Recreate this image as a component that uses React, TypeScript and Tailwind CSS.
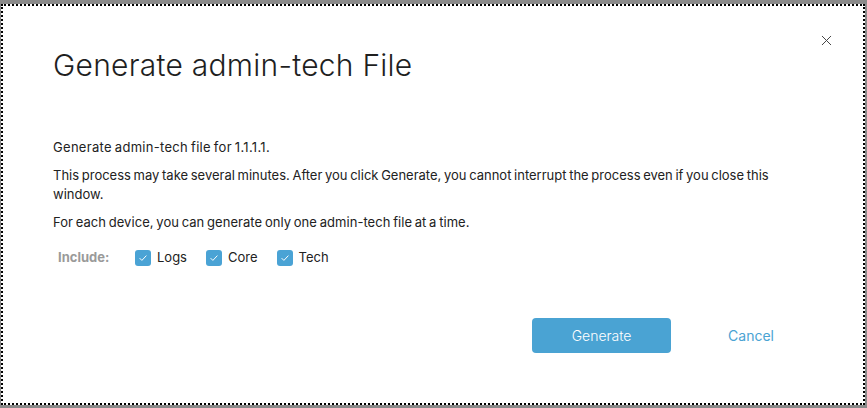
import { X } from "lucide-react";

const font = { fontFamily: "Inter, 'Noto Sans', sans-serif" };

function Check({ label }: { label: string }) {
  return (
    <label className="flex items-center gap-[6px]">
      <span className="flex h-[16px] w-[16px] items-center justify-center rounded-[3px] bg-[#4aa3d5]">
        <svg viewBox="0 0 16 16" className="h-[12px] w-[12px]" fill="none" stroke="#ffffff" strokeWidth="1.3">
          <path d="M3.5 8.2l3 3 6-6.4" />
        </svg>
      </span>
      <span className="text-[13px] text-[#222]">{label}</span>
    </label>
  );
}

export default function App() {
  return (
    <div className="h-[408px] w-[867px] bg-[#8a8a8a] pt-[4px] pb-[3px] pl-[1px] pr-[2px]" style={font}>
      <div className="relative flex h-full flex-col border-2 border-dotted border-black bg-white pl-[50px] pr-[60px]">
        <button className="absolute right-[28px] top-[26px] text-[#444]">
          <X className="h-[17px] w-[17px]" strokeWidth={1.4} />
        </button>
        <h1 className="mt-[41px] text-[30px] font-light leading-[36px] tracking-[0.25px] text-[#1f1f1f]">
          Generate admin-tech File
        </h1>
        <div className="mt-[55px] w-[740px] text-[13px] leading-[19px] text-[#222] [word-spacing:-1px]">
          <p className="tracking-[0.3px]">Generate admin-tech file for 1.1.1.1.</p>
          <p className="mt-[9px]">
            This process may take several minutes. After you click Generate, you cannot interrupt the process even if you close this window.
          </p>
          <p className="mt-[9px] tracking-[0.05px]">For each device, you can generate only one admin-tech file at a time.</p>
        </div>
        <div className="mt-[16px] flex items-center">
          <span className="ml-[5px] w-[79px] text-[13px] font-bold text-[#9a9a9a]">Include:</span>
          <div className="-ml-[2px] flex items-center gap-[19px]">
            <Check label="Logs" />
            <Check label="Core" />
            <Check label="Tech" />
          </div>
        </div>
        <div className="mt-[50px] flex items-center justify-end">
          <button className="h-[35px] w-[139px] rounded-[4px] bg-[#4aa3d3] text-[14px] font-light text-white">Generate</button>
          <button className="ml-[57px] mr-[29px] text-[14px] text-[#4aa3d3]">Cancel</button>
        </div>
      </div>
    </div>
  );
}
